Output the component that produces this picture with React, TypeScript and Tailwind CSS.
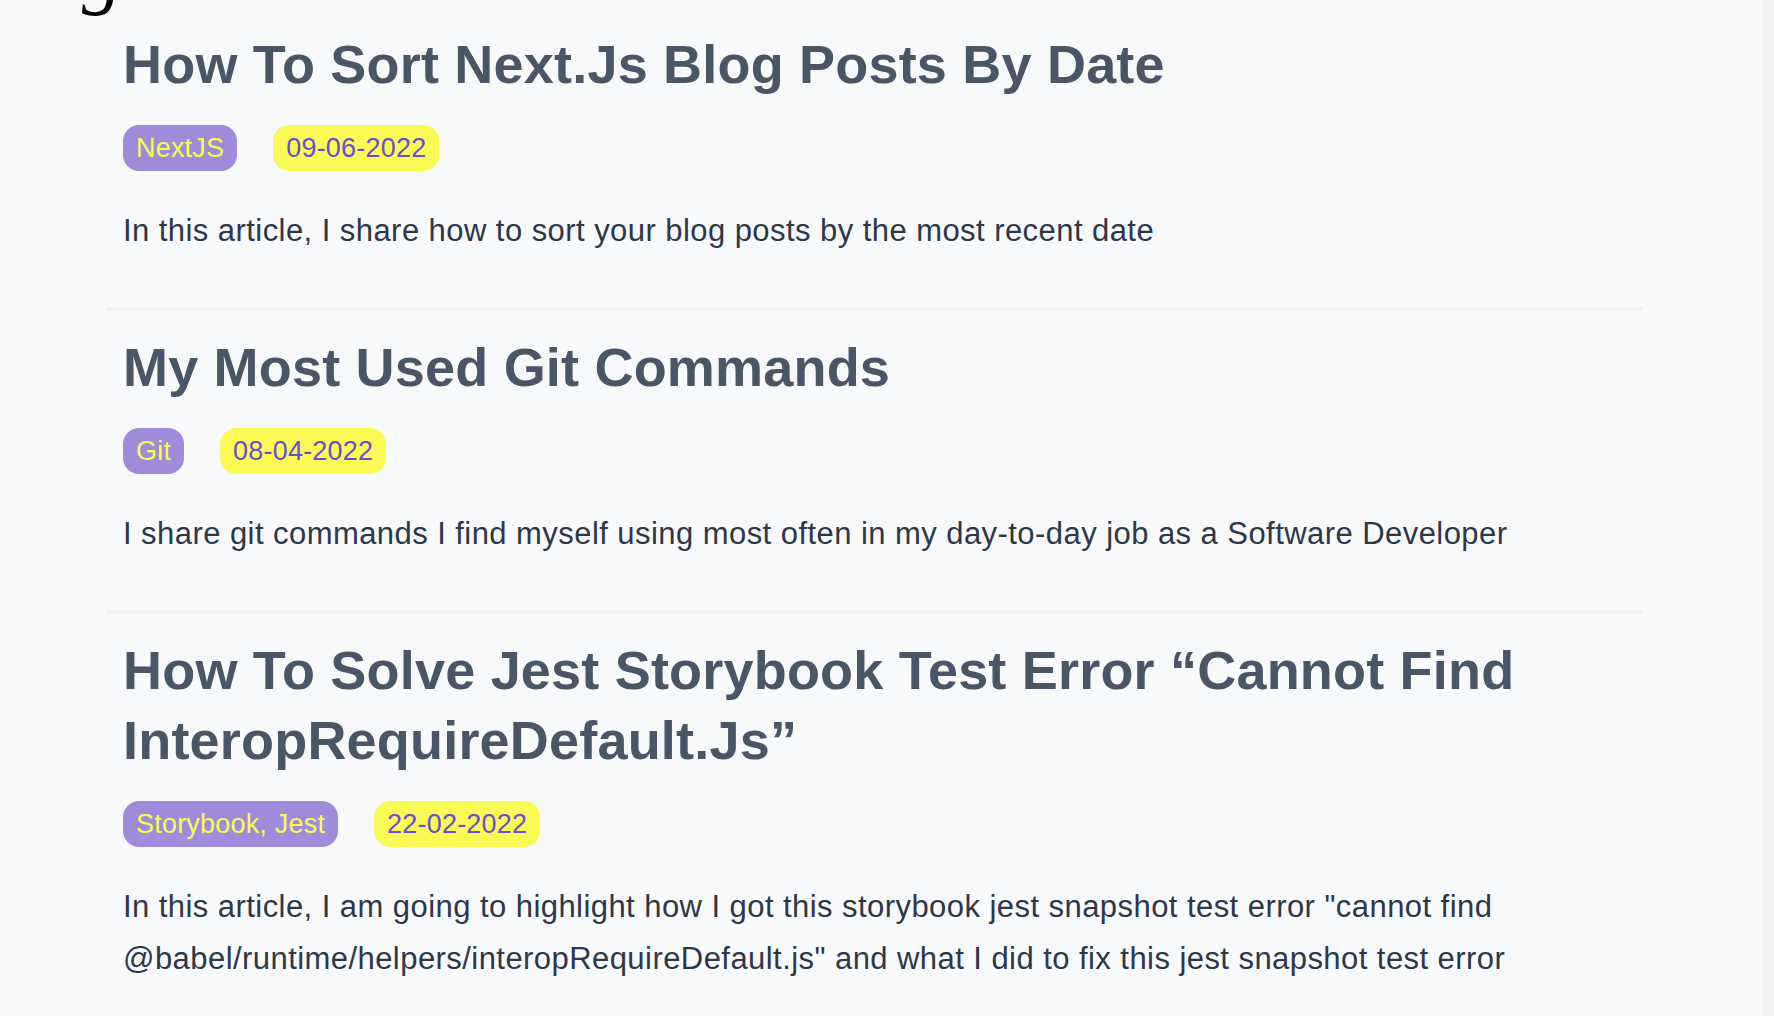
const posts = [
  {
    title: "How To Sort Next.Js Blog Posts By Date",
    tags: "NextJS",
    date: "09-06-2022",
    excerpt: "In this article, I share how to sort your blog posts by the most recent date",
  },
  {
    title: "My Most Used Git Commands",
    tags: "Git",
    date: "08-04-2022",
    excerpt: "I share git commands I find myself using most often in my day-to-day job as a Software Developer",
  },
  {
    title: "How To Solve Jest Storybook Test Error \u201cCannot Find InteropRequireDefault.Js\u201d",
    tags: "Storybook, Jest",
    date: "22-02-2022",
    excerpt:
      'In this article, I am going to highlight how I got this storybook jest snapshot test error "cannot find @babel/runtime/helpers/interopRequireDefault.js" and what I did to fix this jest snapshot test error',
  },
];

const PostItem = ({ post, first }: { post: (typeof posts)[number]; first: boolean }) => {
  return (
    <article className={`${first ? "pt-[7px]" : "pt-[21px]"} pb-[50px] px-4 border-b-4 border-[#f0f1f3]`}>
      <h2 className="text-[54px] leading-[70px] font-bold tracking-[0.2px] text-[#4a5568]">{post.title}</h2>

      {/* Tags + date */}
      <div className="mt-[26px] flex items-center gap-[36px]">
        <span className="h-[46px] px-[13px] flex items-center rounded-[16px] bg-[#a08bdb] text-[#fafa52] text-[27px] tracking-[0.2px]">
          {post.tags}
        </span>
        <span className="h-[46px] px-[13px] flex items-center rounded-[16px] bg-[#fafa55] text-[#6a4ed2] text-[27px] tracking-[0.2px]">
          {post.date}
        </span>
      </div>

      <p className="mt-[34px] text-[31px] leading-[52px] tracking-[0.44px] text-[#2d3748]">{post.excerpt}</p>
    </article>
  );
};

export default function App() {
  return (
    <div className="flex min-h-screen bg-[#f8f9fb] font-['Liberation_Sans',Arial,sans-serif]">
      <main className="flex-1">
        {/* cut-off logo above the fold */}
        <div className="h-[22px] overflow-hidden pl-[82px]">
          <span className="block -mt-[68px] text-[80px] leading-none italic text-black font-['Liberation_Serif',serif]">
            g
          </span>
        </div>

        <div className="ml-[107px] w-[1536px]">
          {posts.map((post, i) => (
            <PostItem key={post.date} post={post} first={i === 0} />
          ))}
        </div>
      </main>

      {/* scrollbar track */}
      <div className="w-[12px] bg-[#f1f2f4]" />
    </div>
  );
}
